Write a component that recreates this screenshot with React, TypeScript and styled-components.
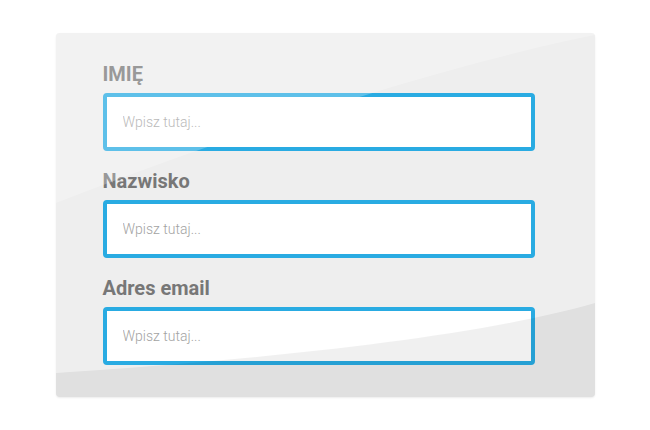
import React from "react";
import styled, { createGlobalStyle } from "styled-components";

const Global = createGlobalStyle`
  html, body { margin: 0; padding: 0; background: #ffffff; }
  * { box-sizing: border-box; }
`;

const Page = styled.div`
  width: 650px;
  height: 430px;
  display: flex;
  align-items: center;
  justify-content: center;
  font-family: Roboto, "Liberation Sans", sans-serif;
`;

const Card = styled.form`
  position: relative;
  width: 539px;
  height: 364px;
  background: #eeeeee;
  border-radius: 4px;
  box-shadow: 0 1px 2px rgba(0, 0, 0, 0.08);
  padding: 30px 47px 0 47px;
  display: flex;
  flex-direction: column;
  gap: 19px;
  overflow: hidden;
`;

const Field = styled.label`
  display: flex;
  flex-direction: column;
  gap: 7px;
`;

const LabelText = styled.span`
  font-size: 20px;
  line-height: 23px;
  font-weight: 700;
  color: #777777;
`;

const TextInput = styled.input`
  width: 432px;
  height: 58px;
  border: 4px solid #29abe2;
  border-radius: 4px;
  background: #ffffff;
  padding: 0 16px;
  font-family: Roboto, "Liberation Sans", sans-serif;
  font-size: 14px;
  font-weight: 300;
  color: #555;
  outline: none;
  &::placeholder {
    color: #a3a3a3;
  }
`;

const Gloss = styled.svg`
  position: absolute;
  inset: 0;
  width: 100%;
  height: 100%;
  pointer-events: none;
`;

const fields = ["IMIĘ", "Nazwisko", "Adres email"];

export default function App() {
  return (
    <>
      <Global />
      <Page>
        <Card onSubmit={(e) => e.preventDefault()}>
          {fields.map((f) => (
            <Field key={f}>
              <LabelText>{f}</LabelText>
              <TextInput type="text" placeholder="Wpisz tutaj..." />
            </Field>
          ))}
          <Gloss viewBox="0 0 539 364" preserveAspectRatio="none">
            <path d="M539,2 C400,30 200,92 0,170 L0,0 L539,0 Z" fill="#ffffff" fillOpacity="0.25" />
            <path d="M0,340 C150,330 400,310 539,270 L539,364 L0,364 Z" fill="#000000" fillOpacity="0.06" />
          </Gloss>
        </Card>
      </Page>
    </>
  );
}
